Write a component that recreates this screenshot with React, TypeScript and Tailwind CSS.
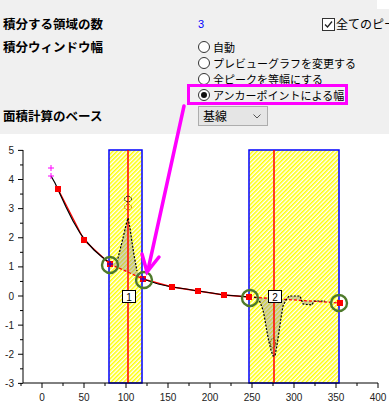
import React from 'react';

const X = (v: number) => 42 + v * 0.84;
const Y = (v: number) => 296 - v * 29.125;

const markers: [number, number][] = [
    [58, 189],
    [84, 240],
    [110, 264],
    [143, 279],
    [172, 287],
    [198, 291],
    [224, 295],
    [249, 297],
    [340, 303],
];

const dataLine = '51,176 55,183 60,194 66,207 73,221 80,233 86,241 94,250 102,257 110,263';
const tailLine = '143,279 158,284 172,287 186,289 198,291 212,293 224,295 238,296 249,297';

const peak1 = '110,264 117,262 120,250 123,238 126,225 128,218 130,228 132,242 134,255 137,271 143,279';
const peak2 =
    '249,297 254,297 257,298 260,302 263,310 265,320 267,332 269,342 271,350 273,356 275,356 277,345 279,332 281,318 283,306 286,300 289,296 300,296 303,304 312,305 314,301 325,301 340,303';

function Radio({ checked, label }: { checked?: boolean; label: string }) {
    return (
        <div className="flex h-[16px] items-center gap-[3px]">
            <span className="grid h-[12px] w-[12px] place-items-center rounded-full border border-[#333] bg-white">
                {checked && <span className="h-[6px] w-[6px] rounded-full bg-[#111]" />}
            </span>
            <span className="text-[11px] leading-none text-black">{label}</span>
        </div>
    );
}

function Chart() {
    const yMajor = [-3, -2, -1, 0, 1, 2, 3, 4, 5];
    const xMajor = [0, 50, 100, 150, 200, 250, 300, 350, 400];
    return (
        <svg width="389" height="278" viewBox="0 134 389 278" className="block bg-white">
            <defs>
                <pattern id="hatch" width="3" height="3" patternUnits="userSpaceOnUse" patternTransform="rotate(45)">
                    <rect width="3" height="3" fill="#ffffff" />
                    <rect width="1.5" height="3" fill="#ffff00" />
                </pattern>
            </defs>

            {/* integration windows */}
            <rect x="109" y="150" width="33" height="233" fill="url(#hatch)" />
            <rect x="249" y="150" width="90" height="233" fill="url(#hatch)" />

            {/* shaded peaks */}
            <polygon points={peak1} fill="#8c8c8c" fillOpacity="0.4" />
            <polygon points={peak2} fill="#8c8c8c" fillOpacity="0.4" />

            <rect x="109" y="150" width="33" height="233" fill="none" stroke="#0000ff" strokeWidth="1.5" />
            <rect x="249" y="150" width="90" height="233" fill="none" stroke="#0000ff" strokeWidth="1.5" />
            <line x1="128" y1="150" x2="128" y2="383" stroke="#ff0000" strokeWidth="1.5" />
            <line x1="274" y1="150" x2="274" y2="383" stroke="#ff0000" strokeWidth="1.5" />

            {/* axes */}
            <line x1="23" y1="150" x2="23" y2="383" stroke="#000" strokeWidth="1" />
            <line x1="23" y1="383" x2="378" y2="383" stroke="#000" strokeWidth="1" />
            {yMajor.map((v) => (
                <g key={v}>
                    <line x1="18" y1={Y(v)} x2="23" y2={Y(v)} stroke="#000" />
                    {v < 5 && <line x1="20" y1={Y(v + 0.5)} x2="23" y2={Y(v + 0.5)} stroke="#000" />}
                    <text x="14" y={Y(v) + 3.5} textAnchor="end" fontSize="10" fill="#222" fontFamily="Liberation Sans, Arial, sans-serif">
                        {v}
                    </text>
                </g>
            ))}
            {xMajor.map((v) => (
                <g key={v}>
                    <line x1={X(v)} y1="383" x2={X(v)} y2="388" stroke="#000" />
                    {v < 400 && <line x1={X(v + 25)} y1="383" x2={X(v + 25)} y2="386" stroke="#000" />}
                    <text x={X(v)} y="401" textAnchor="middle" fontSize="10" fill="#222" fontFamily="Liberation Sans, Arial, sans-serif">
                        {v}
                    </text>
                </g>
            ))}
            <line x1={X(-25)} y1="383" x2={X(-25)} y2="386" stroke="#000" />

            {/* baseline + data */}
            <polyline points="58,189 84,240 110,264" fill="none" stroke="#ff0000" strokeWidth="1.3" />
            <line x1="110" y1="264" x2="143" y2="279" stroke="#ff0000" strokeWidth="1.3" strokeDasharray="3 2" />
            <polyline points="143,279 172,287 198,291 224,295 249,297" fill="none" stroke="#ff0000" strokeWidth="1.3" />
            <line x1="249" y1="297" x2="340" y2="303" stroke="#ff0000" strokeWidth="1.3" strokeDasharray="3 2" />
            <polyline points={dataLine} fill="none" stroke="#000" strokeWidth="1.2" />
            <polyline points={tailLine} fill="none" stroke="#000" strokeWidth="1" />
            <polyline points={peak1.split(' ').slice(1, -1).join(' ')} fill="none" stroke="#000" strokeWidth="1.2" strokeDasharray="2 1.5" />
            <polyline points={peak2.split(' ').slice(1, -1).join(' ')} fill="none" stroke="#000" strokeWidth="1.2" strokeDasharray="2 1.5" />
            <ellipse cx="128" cy="199" rx="3.5" ry="2.8" fill="none" stroke="#000" strokeDasharray="1.5 1" />
            <ellipse cx="128" cy="207" rx="3.5" ry="2.8" fill="none" stroke="#b06a00" strokeDasharray="1.5 1" />
            <ellipse cx="273" cy="343" rx="2.5" ry="5" fill="none" stroke="#6a5400" strokeDasharray="1.5 1" />

            {markers.map(([x, y]) => (
                <rect key={x} x={x - 3} y={y - 3} width="6" height="6" fill="#ff0000" />
            ))}
            <path d="M51 165v6M48 168h6M51 173v6M48 176h6" stroke="#ff00ff" strokeWidth="1" />
            <path d="M110 261v6M107 264h6M143 276v6M140 279h6" stroke="#0000ff" strokeWidth="1" />

            {/* anchor circles */}
            {[
                [110, 265],
                [144, 280],
                [250, 298],
                [339, 303],
            ].map(([x, y]) => (
                <circle key={x} cx={x} cy={y} r="8" fill="none" stroke="#4e7a2b" strokeWidth="2.4" />
            ))}

            {/* peak labels */}
            <rect x="122.5" y="290.5" width="13" height="12" fill="#fff" stroke="#000" />
            <text x="129" y="300.5" textAnchor="middle" fontSize="10" fontFamily="Liberation Sans, Arial, sans-serif">
                1
            </text>
            <rect x="268.5" y="290.5" width="13" height="12" fill="#fff" stroke="#000" />
            <text x="275" y="300.5" textAnchor="middle" fontSize="10" fontFamily="Liberation Sans, Arial, sans-serif">
                2
            </text>
        </svg>
    );
}

export default function App() {
    return (
        <div className="relative h-[412px] w-[389px] overflow-hidden bg-white font-['Noto_Sans_CJK_JP',sans-serif] text-black">
            <div className="relative h-[134px] bg-[#f0f0f0] pl-[3px] pt-[16px]">
                <div className="absolute right-0 top-0 h-[9px] w-[12px] bg-white" />
                <div className="flex h-[16px] items-center">
                    <span className="w-[195px] shrink-0 text-[12.5px] font-bold leading-none">積分する領域の数</span>
                    <span className="w-[124px] shrink-0 font-['Liberation_Sans',sans-serif] text-[11px] leading-none text-[#0000ff]">3</span>
                    <span className="grid h-[13px] w-[13px] shrink-0 place-items-center border border-[#333] bg-white">
                        <svg width="9" height="9" viewBox="0 0 9 9">
                            <path d="M1 4.5l2.5 2.5L8 1.5" fill="none" stroke="#222" strokeWidth="1.3" />
                        </svg>
                    </span>
                    <span className="ml-[1px] shrink-0 whitespace-nowrap text-[12px] leading-none">全てのピーク</span>
                </div>
                <div className="mt-[7px] flex">
                    <span className="flex h-[16px] w-[195px] shrink-0 items-center text-[12.5px] font-bold leading-none">積分ウィンドウ幅</span>
                    <div className="flex flex-col">
                        <Radio label="自動" />
                        <Radio label="プレビューグラフを変更する" />
                        <Radio label="全ピークを等幅にする" />
                        <Radio checked label="アンカーポイントによる幅" />
                    </div>
                </div>
                <div className="mt-[3px] flex items-center">
                    <span className="w-[195px] shrink-0 text-[12.5px] font-bold leading-none">面積計算のベース</span>
                    <div className="flex h-[20px] w-[70px] shrink-0 items-center justify-between border border-[#adadad] bg-[#e5e5e5] pl-[4px] pr-[6px]">
                        <span className="text-[12px] leading-none">基線</span>
                        <svg width="8" height="5" viewBox="0 0 8 5">
                            <path d="M0.5 0.5L4 4L7.5 0.5" fill="none" stroke="#555" strokeWidth="1" />
                        </svg>
                    </div>
                </div>
                <div className="absolute left-[187px] top-[84px] h-[21px] w-[161px] border-[3px] border-[#ff00ff]" />
            </div>
            <Chart />
            <svg className="pointer-events-none absolute left-0 top-0" width="389" height="412">
                <g stroke="#ff00ff" strokeWidth="3.5" fill="none" strokeLinecap="round">
                    <line x1="184" y1="106" x2="148" y2="270" />
                    <polyline points="142,254 147,272 159,257" />
                </g>
            </svg>
        </div>
    );
}
